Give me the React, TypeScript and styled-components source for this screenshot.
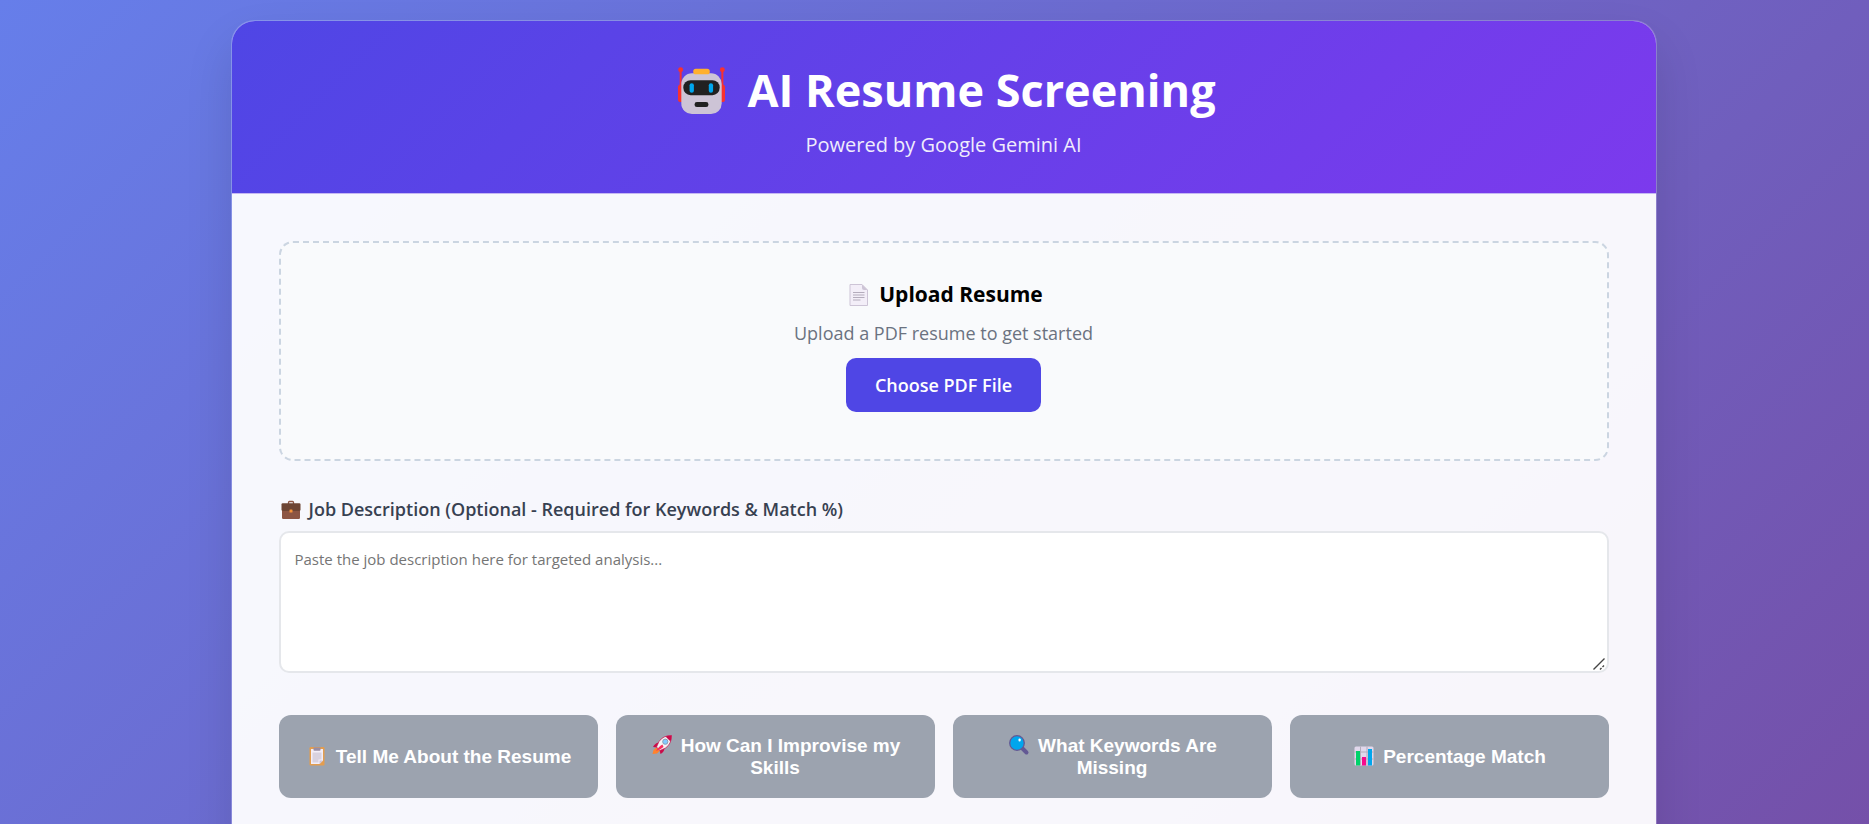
import React from "react";
import styled, { createGlobalStyle } from "styled-components";

const GlobalStyle = createGlobalStyle`
  *, *::before, *::after { box-sizing: border-box; }
  body {
    margin: 0;
    font-family: "Open Sans", "Noto Sans", sans-serif;
    color: #000;
  }
`;

const Page = styled.div`
  display: flex;
  justify-content: center;
  min-height: 100vh;
  padding: 20px 0 0 18px;
  overflow: hidden;
  background: linear-gradient(135deg, #667eea 0%, #764ba2 110%);
`;

const Card = styled.main`
  flex: 0 1 1426px;
  border: 1px solid rgba(255, 255, 255, 0.2);
  border-bottom: 0;
  border-radius: 24px 24px 0 0;
  overflow: hidden;
  background: rgba(255, 255, 255, 0.95);
  background-clip: padding-box;
  box-shadow: 0 24px 48px rgba(0, 0, 0, 0.12);
`;

const Header = styled.header`
  padding: 39px 36px 34px;
  text-align: center;
  color: #fff;
  background: linear-gradient(135deg, #4f46e5 0%, #7c3aed 100%);
  border-bottom: 1px solid #c5b8f3;
`;

const Title = styled.h1`
  margin: 0 0 11px;
  font-size: 45px;
  line-height: 60px;
  font-weight: 700;
`;

const Subtitle = styled.p`
  margin: 0;
  font-size: 20px;
  line-height: 28px;
  opacity: 0.9;
`;

const Content = styled.div`
  padding: 47px;
`;

const UploadBox = styled.section`
  display: flex;
  flex-direction: column;
  align-items: center;
  padding: 36px 36px 47px;
  border: 2px dashed #cbd5e1;
  border-radius: 14px;
  background: #f9fafc;
`;

const UploadTitle = styled.h2`
  margin: 0 0 10px;
  font-size: 21px;
  line-height: 30px;
  font-weight: 700;
`;

const UploadHint = styled.p`
  margin: 0 0 11px;
  font-size: 18px;
  line-height: 28px;
  color: #6b7280;
`;

const ChooseButton = styled.button`
  padding: 12px 29px;
  border: 0;
  border-radius: 10px;
  background: #4f46e5;
  color: #fff;
  font: 600 18px/30px "Open Sans", "Noto Sans", sans-serif;
  cursor: pointer;
`;

const Field = styled.div`
  display: flex;
  flex-direction: column;
  margin: 35px 0 42px;
`;

const FieldLabel = styled.label`
  margin-bottom: 9px;
  font-size: 18px;
  line-height: 26px;
  font-weight: 600;
  color: #374151;
`;

const TextAreaFrame = styled.div`
  position: relative;
  display: flex;
`;

const TextArea = styled.textarea`
  flex: 1;
  height: 142px;
  padding: 14px;
  border: 2px solid #e5e7eb;
  border-radius: 10px;
  background: #fff;
  font: 400 15px/24px "Open Sans", "Noto Sans", sans-serif;
  resize: vertical;
  &::placeholder { color: #757575; opacity: 1; }
  &::-webkit-resizer { background: transparent; }
`;

const ResizeGrip = styled.svg`
  position: absolute;
  right: 4px;
  bottom: 3px;
  width: 12px;
  height: 12px;
  pointer-events: none;
`;

const Actions = styled.div`
  display: grid;
  grid-template-columns: repeat(4, 1fr);
  gap: 18px;
`;

const ActionButton = styled.button`
  min-height: 83px;
  padding: 18px 24px;
  border: 0;
  border-radius: 12px;
  background: #9ca3af;
  color: #fff;
  font: 700 19px/22px "Liberation Sans", Arial, sans-serif;
  cursor: not-allowed;
`;

const Icon = styled.svg<{ $size: number; $gap: number; $lead: number; $drop: number }>`
  width: ${(p) => p.$size}px;
  height: ${(p) => p.$size}px;
  margin: 0 ${(p) => p.$gap}px 0 ${(p) => p.$lead}px;
  vertical-align: -${(p) => p.$drop}px;
  overflow: visible;
`;

const RobotIcon = () => (
  <Icon $size={47} $gap={22} $lead={7} $drop={7} viewBox="0 0 142 142" aria-hidden="true">
    <rect x="0" y="53" width="20" height="53" rx="8" fill="#f8312f" />
    <rect x="122" y="53" width="20" height="53" rx="8" fill="#f8312f" />
    <path d="M8 8v52M134 8v52" stroke="#f8312f" strokeWidth="6" />
    <circle cx="8" cy="8" r="7.500" fill="#f8312f" />
    <circle cx="134" cy="8" r="7.500" fill="#f8312f" />
    <rect x="10" y="19" width="122" height="123" rx="32" fill="#cdc4d6" />
    <rect x="46" y="5" width="50" height="17" rx="8" fill="#ffb02e" />
    <rect x="16" y="40" width="110" height="45" rx="22" fill="#212121" />
    <rect x="35" y="49" width="13" height="29" rx="6.500" fill="#00a6ed" />
    <rect x="93" y="49" width="13" height="29" rx="6.500" fill="#00a6ed" />
    <rect x="50" y="106" width="42" height="15" rx="7" fill="#212121" />
  </Icon>
);

const PageIcon = () => (
  <Icon $size={22} $gap={9} $lead={4} $drop={4} viewBox="0 0 22 22" aria-hidden="true">
    <path d="M2 .5h12l5.500 5.500v15.500H2z" fill="#f3eef8" stroke="#cdc4d6" />
    <path d="M14 .5V4a2 2 0 0 0 2 2h3.500z" fill="#cdc4d6" />
    <path d="M5 8.500h11.500M5 11h11.500M5 13.500h11.500M5 16h7.500" stroke="#b4acbc" />
  </Icon>
);

const BriefcaseIcon = () => (
  <Icon $size={20} $gap={8} $lead={2} $drop={4} viewBox="0 0 20 20" aria-hidden="true">
    <path d="M7.500 4V2.500q0-1 1-1h3q1 0 1 1V4" fill="none" stroke="#8c5543" strokeWidth="1.300" />
    <rect x="1" y="9" width="18" height="10" rx="1.200" fill="#8c5543" />
    <path d="M.5 4.500q0-1.200 1.200-1.200h16.600q1.200 0 1.200 1.200v5q0 1.500-1.500 1.500H2q-1.500 0-1.500-1.500z" fill="#6d4534" />
    <rect x="8.500" y="9.500" width="3" height="3" rx=".6" fill="#f3923a" />
  </Icon>
);

const ClipboardIcon = () => (
  <Icon $size={20} $gap={9} $lead={2} $drop={3} viewBox="0 0 20 20" aria-hidden="true">
    <rect x="2.500" y="1" width="15" height="18.500" rx="1.200" fill="#e39d4f" />
    <path d="M4 3h12v11.500L12.500 18H4z" fill="#f3eef8" />
    <path d="M5.500 6.500h9v7h-3v3h-6z" fill="#d9d2df" />
    <path d="M16 14.500h-3.500V18z" fill="#cdc4d6" />
    <path d="M6.500 1.500h7V4q0 .8-.8.8H7.300q-.8 0-.8-.8z" fill="#998ea4" />
  </Icon>
);

const RocketIcon = () => (
  <Icon $size={20} $gap={9} $lead={2} $drop={3} viewBox="0 0 20 20" aria-hidden="true">
    <path d="M4.500 12.500 1.500 15 .5 19l4.500-.5 3-3z" fill="#ff822d" />
    <path d="M6.500 7.500Q3 8 1 12l4 .5zM12.500 13.500Q12 17 8.500 19l-1-4z" fill="#ca0b4a" />
    <path d="M19.500.500Q11 .5 7 6.500L4.500 12 8 15.500l5.500-2.500q6-4 6-12.500z" fill="#f4f4f4" stroke="#ca0b4a" strokeWidth=".7" />
    <path d="M19.500.500q-3.500 0-6 1l5 5q1-2.500 1-6z" fill="#ca0b4a" />
    <path d="M10.500 9.500Q7 11 4 16q5-1.500 7.500-4z" fill="#f92f60" />
    <circle cx="13.300" cy="6.700" r="2.600" fill="#83cbff" stroke="#8d9db3" />
  </Icon>
);

const SearchIcon = () => (
  <Icon $size={20} $gap={9} $lead={2} $drop={3} viewBox="0 0 20 20" aria-hidden="true">
    <path d="m13 13 4.500 4.500" stroke="#635994" strokeWidth="4" strokeLinecap="round" />
    <circle cx="8" cy="8" r="7.300" fill="#00a6ed" stroke="#635994" strokeWidth="1.300" />
    <rect x="9.500" y="3.500" width="2.200" height="3" rx="1" fill="#fff" />
  </Icon>
);

const ChartIcon = () => (
  <Icon $size={20} $gap={9} $lead={2} $drop={3} viewBox="0 0 20 20" aria-hidden="true">
    <rect x=".5" y=".5" width="19" height="19" rx="1.500" fill="#e1d8ec" />
    <path d="M.5 6h19M.5 13h19M6.500.500v19M13 .5v19" stroke="#b4acbc" />
    <rect x="2" y="5" width="4" height="14.500" fill="#00d26a" />
    <rect x="8" y="11" width="4" height="8.500" fill="#f70a8d" />
    <rect x="14" y="3" width="4" height="16.500" fill="#00a6ed" />
  </Icon>
);

const actions = [
  { label: "Tell Me About the Resume", Glyph: ClipboardIcon },
  { label: "How Can I Improvise my Skills", Glyph: RocketIcon },
  { label: "What Keywords Are Missing", Glyph: SearchIcon },
  { label: "Percentage Match", Glyph: ChartIcon },
];

export default function App() {
  return (
    <>
      <GlobalStyle />
      <Page>
        <Card>
          <Header>
            <Title><RobotIcon />AI Resume Screening</Title>
            <Subtitle>Powered by Google Gemini AI</Subtitle>
          </Header>
          <Content>
            <UploadBox>
              <UploadTitle><PageIcon />Upload Resume</UploadTitle>
              <UploadHint>Upload a PDF resume to get started</UploadHint>
              <ChooseButton type="button">Choose PDF File</ChooseButton>
            </UploadBox>
            <Field>
              <FieldLabel htmlFor="job-description">
                <BriefcaseIcon />Job Description (Optional - Required for Keywords &amp; Match %)
              </FieldLabel>
              <TextAreaFrame>
                <TextArea
                  id="job-description"
                  placeholder="Paste the job description here for targeted analysis..."
                />
                <ResizeGrip viewBox="0 0 12 12" aria-hidden="true">
                  <path d="M.5 11.500l11-11M7 11.500l1.500-1.500M9.500 9l1.500-1.500" stroke="#444" strokeWidth="1.400" />
                </ResizeGrip>
              </TextAreaFrame>
            </Field>
            <Actions>
              {actions.map(({ label, Glyph }) => (
                <ActionButton key={label} type="button"><Glyph />{label}</ActionButton>
              ))}
            </Actions>
          </Content>
        </Card>
      </Page>
    </>
  );
}
